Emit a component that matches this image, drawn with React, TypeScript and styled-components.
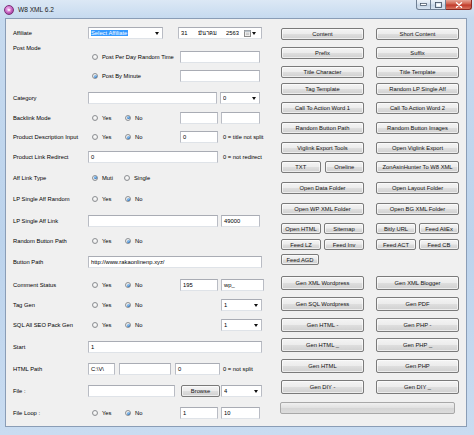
import React from "react";
import styled, { createGlobalStyle } from "styled-components";

const GlobalStyle = createGlobalStyle`
  html, body {
    margin: 0;
    padding: 0;
    background: #ffffff;
  }
  body {
    font-family: "Liberation Sans", "DejaVu Sans", "Noto Sans", sans-serif;
    font-size: 5.8px;
    color: #000;
  }
`;

const Window = styled.div`
  width: 474px;
  height: 435px;
  box-sizing: border-box;
  display: flex;
  flex-direction: column;
  background: linear-gradient(to bottom, #dce8f5 0px, #c6daef 18px, #bcd3ec 55%, #c9dcf1 100%);
  overflow: hidden;
`;

const TitleBar = styled.div`
  height: 18px;
  flex: none;
  display: flex;
  align-items: flex-start;
`;

const TitleIcon = styled.div`
  width: 8px;
  height: 8px;
  margin: 5px 0 0 4px;
  border-radius: 50%;
  background: radial-gradient(circle at 40% 35%, #f3b6ef 0%, #c35fbf 55%, #8a2f86 100%);
  border: 1px solid #7a3076;
  color: #fff;
  font-size: 6px;
  line-height: 8px;
  text-align: center;
  font-weight: bold;
`;

const TitleText = styled.div`
  margin: 5px 0 0 4px;
  font-size: 6.6px;
  line-height: 10px;
  color: #1a1a1a;
`;

const Spacer = styled.div`
  flex: 1;
`;

const Captions = styled.div`
  display: flex;
  margin-right: 2px;
`;

const CaptionButton = styled.div<{ $w: number; $close?: boolean; $first?: boolean }>`
  width: ${(p) => p.$w}px;
  height: 10px;
  box-sizing: border-box;
  display: flex;
  align-items: center;
  justify-content: center;
  border: 1px solid ${(p) => (p.$close ? "#8c2a22" : "#6f7f93")};
  border-top: none;
  border-left: ${(p) => (p.$first ? undefined : "none")};
  border-radius: ${(p) => (p.$close ? "0 0 3px 0" : p.$first ? "0 0 0 3px" : "0")};
  background: ${(p) =>
    p.$close
      ? "linear-gradient(to bottom, #e6a597 0%, #d1604c 45%, #c0392b 55%, #d8735e 100%)"
      : "linear-gradient(to bottom, #eef3f9 0%, #d7e2ee 45%, #c3d2e3 55%, #d9e5f1 100%)"};
`;

const Client = styled.div`
  flex: 1;
  margin: 0 7px 8px 5px;
  background: #f0f0f0;
  border: 1px solid #8a9db6;
  display: flex;
`;

const LeftPanel = styled.div`
  width: 274px;
  flex: none;
  box-sizing: border-box;
  padding: 5px 0 0 7px;
  display: flex;
  flex-direction: column;
`;

const Row = styled.div<{ $h: number }>`
  height: ${(p) => p.$h}px;
  display: flex;
  align-items: center;
`;

const TopRow = styled(Row)`
  align-items: flex-start;
`;

const Label = styled.div`
  width: 75px;
  flex: none;
  white-space: nowrap;
  line-height: 12px;
`;

const Fields = styled.div`
  display: flex;
  align-items: center;
`;

const StackFields = styled.div`
  display: flex;
  flex-direction: column;
  padding-top: 6px;
`;

const Box = styled.div<{ $w: number; $ml?: number }>`
  width: ${(p) => p.$w}px;
  margin-left: ${(p) => p.$ml ?? 0}px;
  height: 12px;
  flex: none;
  box-sizing: border-box;
  border: 1px solid #b9bcc4;
  border-top-color: #a9acb4;
  border-bottom-color: #dfe3e8;
  background: #fff;
  padding: 0 2px;
  line-height: 10px;
  white-space: nowrap;
  overflow: hidden;
  display: flex;
  align-items: center;
`;

const BoxText = styled.span`
  flex: 1;
  overflow: hidden;
`;

const Arrow = styled.span`
  width: 0;
  height: 0;
  flex: none;
  margin-right: 1px;
  border-left: 2.5px solid transparent;
  border-right: 2.5px solid transparent;
  border-top: 3px solid #111;
`;

const Selected = styled.span`
  background: #3399ff;
  color: #fff;
  padding: 0 1px;
  margin-left: -1px;
`;

const DatePart = styled.span<{ $w: number }>`
  width: ${(p) => p.$w}px;
  flex: none;
  white-space: nowrap;
  overflow: hidden;
`;

const RadioGroup = styled.div<{ $w: number }>`
  width: ${(p) => p.$w}px;
  flex: none;
  display: flex;
  align-items: center;
  padding-left: 4px;
  box-sizing: border-box;
`;

const RadioItem = styled.div<{ $w?: number }>`
  width: ${(p) => (p.$w ? `${p.$w}px` : "auto")};
  flex: none;
  display: flex;
  align-items: center;
  gap: 4px;
  white-space: nowrap;
`;

const RadioDot = styled.span<{ $checked?: boolean }>`
  position: relative;
  width: 6px;
  height: 6px;
  flex: none;
  box-sizing: border-box;
  border-radius: 50%;
  border: 1px solid #8e9194;
  background: radial-gradient(circle at 50% 40%, #ffffff 0%, #e6e6e6 70%, #d2d2d2 100%);

  &::after {
    content: "";
    display: ${(p) => (p.$checked ? "block" : "none")};
    position: absolute;
    left: 0.5px;
    top: 0.5px;
    width: 3px;
    height: 3px;
    border-radius: 50%;
    background: radial-gradient(circle at 40% 35%, #a9d3f7 0%, #3b82c9 60%, #1d4f8c 100%);
  }
`;

const Note = styled.span<{ $ml: number }>`
  margin-left: ${(p) => p.$ml}px;
  white-space: nowrap;
`;

const WinButton = styled.div<{ $w?: number; $ml?: number; $h?: number }>`
  ${(p) => (p.$w ? `width: ${p.$w}px; flex: none;` : "flex: 1;")}
  margin-left: ${(p) => p.$ml ?? 0}px;
  height: ${(p) => (p.$h ? `${p.$h}px` : "100%")};
  box-sizing: border-box;
  border: 1px solid #7a7a7a;
  border-radius: 2px;
  background: linear-gradient(to bottom, #f4f4f4 0%, #ececec 48%, #dedede 52%, #d0d0d0 100%);
  box-shadow: inset 0 0 0 1px rgba(255, 255, 255, 0.6);
  display: flex;
  align-items: center;
  justify-content: center;
  white-space: nowrap;
  overflow: hidden;
  color: #111;
`;

const RightPanel = styled.div`
  flex: 1;
  padding: 9px 0 0 1px;
  display: flex;
  flex-direction: column;
`;

const ButtonRow = styled.div<{ $mt: number; $h: number }>`
  margin-top: ${(p) => p.$mt}px;
  height: ${(p) => p.$h}px;
  display: grid;
  grid-template-columns: 83px 83px;
  column-gap: 12px;
`;

const Cell = styled.div<{ $gap: number }>`
  display: flex;
  gap: ${(p) => p.$gap}px;
`;

const Progress = styled.div`
  margin-top: 8px;
  margin-left: -1px;
  width: 175px;
  height: 12px;
  box-sizing: border-box;
  border: 1px solid #a8a8a8;
  border-radius: 2px;
  background: linear-gradient(to bottom, #f0f0f0 0%, #e2e2e2 45%, #d6d6d6 55%, #dcdcdc 100%);
`;

const CalendarIcon = () => (
  <svg width="7" height="7" viewBox="0 0 7 7" style={{ flex: "none", marginRight: 1 }}>
    <rect x="0.5" y="0.5" width="6" height="6" fill="#f4f4f4" stroke="#8a8a8a" />
    <rect x="0.5" y="0.5" width="6" height="1.6" fill="#b8c2cc" />
    <path d="M1.8 3.2h3.4M1.8 4.6h3.4" stroke="#a0a0a0" strokeWidth="0.6" />
  </svg>
);

const Radio = ({ label, checked, w }: { label: string; checked?: boolean; w?: number }) => (
  <RadioItem $w={w}>
    <RadioDot $checked={checked} />
    <span>{label}</span>
  </RadioItem>
);

const YesNo = ({ yes }: { yes?: boolean }) => (
  <RadioGroup $w={92}>
    <Radio label="Yes" checked={yes} w={33} />
    <Radio label="No" checked={!yes} />
  </RadioGroup>
);

const Combo = ({ w, ml, value }: { w: number; ml?: number; value: string }) => (
  <Box $w={w} $ml={ml}>
    <BoxText>{value}</BoxText>
    <Arrow />
  </Box>
);

interface ButtonRowData {
  mt: number;
  h: number;
  left: string[];
  right: string[];
  gap?: number;
  half?: boolean;
}

const rightRows: ButtonRowData[] = [
  { mt: 0, h: 12, left: ["Content"], right: ["Short Content"] },
  { mt: 7, h: 12, left: ["Prefix"], right: ["Suffix"] },
  { mt: 7, h: 12, left: ["Title Character"], right: ["Title Template"] },
  { mt: 5, h: 12, left: ["Tag Template"], right: ["Random LP Single Aff"] },
  { mt: 7, h: 12, left: ["Call To Action Word 1"], right: ["Call To Action Word 2"] },
  { mt: 8, h: 12, left: ["Random Button Path"], right: ["Random Button Images"] },
  { mt: 8, h: 12, left: ["Viglink Export Tools"], right: ["Open Viglink Export"] },
  { mt: 7, h: 12, left: ["TXT", "Oneline"], right: ["ZonAsinHunter To W8 XML"] },
  { mt: 9, h: 12, left: ["Open Data Folder"], right: ["Open Layout Folder"] },
  { mt: 9, h: 12, left: ["Open WP XML Folder"], right: ["Open BG XML Folder"] },
  { mt: 8, h: 11, left: ["Open HTML", "Sitemap"], right: ["Bitly URL", "Feed AliEx"], gap: 3 },
  { mt: 5, h: 11, left: ["Feed LZ", "Feed Inv"], right: ["Feed ACT", "Feed CB"], gap: 3 },
  { mt: 4, h: 11, left: ["Feed AGD"], right: [], half: true },
  { mt: 11, h: 14, left: ["Gen XML Wordpress"], right: ["Gen XML Blogger"] },
  { mt: 7, h: 14, left: ["Gen SQL Wordpress"], right: ["Gen PDF"] },
  { mt: 7, h: 14, left: ["Gen HTML -"], right: ["Gen PHP -"] },
  { mt: 6, h: 14, left: ["Gen HTML _"], right: ["Gen PHP _"] },
  { mt: 7, h: 14, left: ["Gen HTML"], right: ["Gen PHP"] },
  { mt: 7, h: 14, left: ["Gen DIY -"], right: ["Gen DIY _"] },
];

const App = () => {
  return (
    <>
      <GlobalStyle />
      <Window>
        <TitleBar>
          <TitleIcon>×</TitleIcon>
          <TitleText>W8 XML 6.2</TitleText>
          <Spacer />
          <Captions>
            <CaptionButton $w={15} $first>
              <svg width="7" height="3" viewBox="0 0 7 3">
                <rect x="0.5" y="0.5" width="6" height="2" fill="#fff" stroke="#3c4a5c" strokeWidth="0.7" />
              </svg>
            </CaptionButton>
            <CaptionButton $w={15}>
              <svg width="7" height="6" viewBox="0 0 7 6">
                <rect x="0.5" y="0.5" width="6" height="5" fill="none" stroke="#3c4a5c" strokeWidth="0.8" />
                <rect x="1.5" y="1.8" width="4" height="2.6" fill="#fff" />
              </svg>
            </CaptionButton>
            <CaptionButton $w={26} $close>
              <svg width="8" height="6" viewBox="0 0 8 6">
                <path d="M1.5 0.8 L6.5 5.2 M6.5 0.8 L1.5 5.2" stroke="#fff" strokeWidth="1.4" strokeLinecap="round" />
              </svg>
            </CaptionButton>
          </Captions>
        </TitleBar>

        <Client>
          <LeftPanel>
            <Row $h={18}>
              <Label>Affiliate</Label>
              <Fields>
                <Box $w={75} $ml={0}>
                  <BoxText>
                    <Selected>Select Affiliate</Selected>
                  </BoxText>
                  <Arrow />
                </Box>
                <Box $w={84} $ml={15}>
                  <DatePart $w={17}>31</DatePart>
                  <DatePart $w={28}>มีนาคม</DatePart>
                  <DatePart $w={18}>2563</DatePart>
                  <CalendarIcon />
                  <Arrow />
                </Box>
              </Fields>
            </Row>

            <TopRow $h={46}>
              <Label>Post Mode</Label>
              <StackFields>
                <Row $h={18}>
                  <RadioGroup $w={92}>
                    <Radio label="Post Per Day Random Time" />
                  </RadioGroup>
                  <Box $w={80} />
                </Row>
                <Row $h={20}>
                  <RadioGroup $w={92}>
                    <Radio label="Post By Minute" checked />
                  </RadioGroup>
                  <Box $w={80} />
                </Row>
              </StackFields>
            </TopRow>

            <Row $h={20}>
              <Label>Category</Label>
              <Fields>
                <Box $w={129} />
                <Combo w={40} ml={3} value="0" />
              </Fields>
            </Row>

            <Row $h={19}>
              <Label>Backlink Mode</Label>
              <Fields>
                <YesNo />
                <Box $w={38} />
                <Box $w={39} $ml={3} />
              </Fields>
            </Row>

            <Row $h={20}>
              <Label>Product Description Input</Label>
              <Fields>
                <YesNo />
                <Box $w={38}>0</Box>
                <Note $ml={5}>0 = title not split</Note>
              </Fields>
            </Row>

            <Row $h={20}>
              <Label>Product Link Redirect</Label>
              <Fields>
                <Box $w={130}>0</Box>
                <Note $ml={5}>0 = not redirect</Note>
              </Fields>
            </Row>

            <Row $h={21}>
              <Label>Aff Link Type</Label>
              <Fields>
                <RadioGroup $w={92}>
                  <Radio label="Muti" checked w={32} />
                  <Radio label="Single" />
                </RadioGroup>
              </Fields>
            </Row>

            <Row $h={22}>
              <Label>LP Single Aff Random</Label>
              <Fields>
                <YesNo />
              </Fields>
            </Row>

            <Row $h={22}>
              <Label>LP Single Aff Link</Label>
              <Fields>
                <Box $w={130} />
                <Box $w={39} $ml={3}>49000</Box>
              </Fields>
            </Row>

            <Row $h={18}>
              <Label>Random Button Path</Label>
              <Fields>
                <YesNo />
              </Fields>
            </Row>

            <Row $h={24}>
              <Label>Button Path</Label>
              <Fields>
                <Box $w={174}>http://www.rakaonlinenp.xyz/</Box>
              </Fields>
            </Row>

            <Row $h={22}>
              <Label>Comment Status</Label>
              <Fields>
                <YesNo />
                <Box $w={38}>195</Box>
                <Box $w={43} $ml={3}>wp_</Box>
              </Fields>
            </Row>

            <Row $h={18}>
              <Label>Tag Gen</Label>
              <Fields>
                <YesNo />
                <Combo w={41} ml={41} value="1" />
              </Fields>
            </Row>

            <Row $h={22}>
              <Label>SQL All SEO Pack Gen</Label>
              <Fields>
                <YesNo />
                <Combo w={41} ml={41} value="1" />
              </Fields>
            </Row>

            <Row $h={22}>
              <Label>Start</Label>
              <Fields>
                <Box $w={174}>1</Box>
              </Fields>
            </Row>

            <Row $h={22}>
              <Label>HTML Path</Label>
              <Fields>
                <Box $w={27}>C:\V\</Box>
                <Box $w={52} $ml={4} />
                <Box $w={45} $ml={4}>0</Box>
                <Note $ml={3}>0 = not split</Note>
              </Fields>
            </Row>

            <Row $h={22}>
              <Label>File :</Label>
              <Fields>
                <Box $w={87} />
                <WinButton $w={39} $ml={6} $h={12}>Browse</WinButton>
                <Combo w={41} ml={1} value="4" />
              </Fields>
            </Row>

            <Row $h={22}>
              <Label>File Loop :</Label>
              <Fields>
                <YesNo />
                <Box $w={38}>1</Box>
                <Box $w={39} $ml={3}>10</Box>
              </Fields>
            </Row>
          </LeftPanel>

          <RightPanel>
            {rightRows.map((row, i) => (
              <ButtonRow key={i} $mt={row.mt} $h={row.h}>
                <Cell $gap={row.gap ?? 4}>
                  {row.left.map((t) => (
                    <WinButton key={t} $w={row.half ? 38 : undefined}>
                      {t}
                    </WinButton>
                  ))}
                </Cell>
                <Cell $gap={row.gap ?? 4}>
                  {row.right.map((t) => (
                    <WinButton key={t}>{t}</WinButton>
                  ))}
                </Cell>
              </ButtonRow>
            ))}
            <Progress />
          </RightPanel>
        </Client>
      </Window>
    </>
  );
};

export default App;
